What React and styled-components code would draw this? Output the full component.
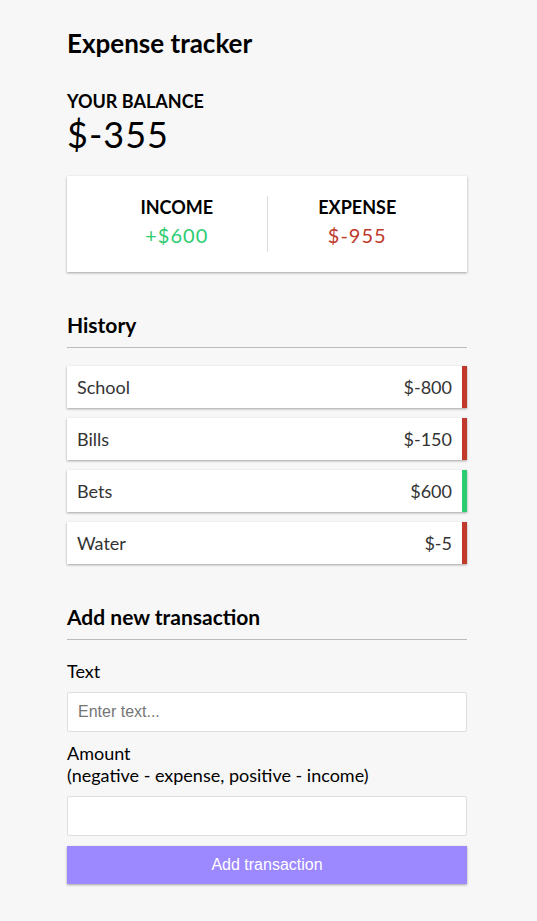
import React, { useState } from "react";
import styled, { createGlobalStyle } from "styled-components";

const shadow = "0 1px 3px rgba(0, 0, 0, 0.12), 0 1px 2px rgba(0, 0, 0, 0.24)";

const GlobalStyle = createGlobalStyle`
  * {
    box-sizing: border-box;
  }
  body {
    margin: 0;
    background-color: #f7f7f7;
    font-family: Lato, "Open Sans", sans-serif;
    font-size: 18px;
    color: #000;
  }
`;

const Container = styled.div`
  width: 400px;
  margin: 27px 0 30px 67px;
`;

const Title = styled.h2`
  font-size: 26px;
  font-weight: 700;
  margin: 0 0 30.6px;
`;

const Caps = styled.h4`
  font-size: 18px;
  margin: 0;
  text-transform: uppercase;
`;

const Balance = styled.h1`
  font-size: 36px;
  font-weight: 400;
  letter-spacing: 1px;
  margin: 0;
`;

const IncExp = styled.div`
  display: flex;
  justify-content: space-between;
  background-color: #fff;
  box-shadow: ${shadow};
  padding: 20px;
  margin: 20px 0;
`;

const IncExpCol = styled.div`
  flex: 1;
  text-align: center;
  border-right: ${(p) => (p.$divider ? "1px solid #dedede" : "none")};
`;

const Money = styled.p`
  font-size: 20px;
  letter-spacing: 1px;
  margin: 5px 0;
  color: ${(p) => (p.$plus ? "#2ecc71" : "#c0392b")};
`;

const Heading = styled.h3`
  font-size: 21px;
  border-bottom: 1px solid #bbb;
  padding-bottom: 10px;
  margin: 40px 0 10px;
`;

const List = styled.ul`
  list-style-type: none;
  padding: 0;
  margin: 18px 0 40px;
`;

const Item = styled.li`
  display: flex;
  justify-content: space-between;
  background-color: #fff;
  box-shadow: ${shadow};
  color: #333;
  padding: 10px;
  margin: 10px 0;
  border-right: 5px solid ${(p) => (p.$plus ? "#2ecc71" : "#c0392b")};
`;

const FormControl = styled.div``;

const Label = styled.label`
  display: inline-block;
  margin: 10px 0;
`;

const Input = styled.input`
  display: block;
  width: 100%;
  border: 1px solid #dedede;
  border-radius: 2px;
  font-family: Arial, "Liberation Sans", sans-serif;
  font-size: 16px;
  padding: 10px;
  background: #fff;
  outline: none;
`;

const Button = styled.button`
  display: block;
  width: 100%;
  cursor: pointer;
  background-color: #9c88ff;
  box-shadow: ${shadow};
  color: #fff;
  border: 0;
  font-family: Arial, "Liberation Sans", sans-serif;
  font-size: 16px;
  margin: 10px 0 30px;
  padding: 10px;
`;

const transactions = [
  { id: 1, text: "School", amount: -800 },
  { id: 2, text: "Bills", amount: -150 },
  { id: 3, text: "Bets", amount: 600 },
  { id: 4, text: "Water", amount: -5 },
];

export default function App() {
  const [text, setText] = useState("");
  const [amount, setAmount] = useState("");

  const income = transactions
    .filter((t) => t.amount > 0)
    .reduce((s, t) => s + t.amount, 0);
  const expense = transactions
    .filter((t) => t.amount < 0)
    .reduce((s, t) => s + t.amount, 0);

  return (
    <>
      <GlobalStyle />
      <Container>
        <Title>Expense tracker</Title>
        <Caps>Your Balance</Caps>
        <Balance>${income + expense}</Balance>

        <IncExp>
          <IncExpCol $divider>
            <Caps>Income</Caps>
            <Money $plus>+${income}</Money>
          </IncExpCol>
          <IncExpCol>
            <Caps>Expense</Caps>
            <Money>${expense}</Money>
          </IncExpCol>
        </IncExp>

        <Heading>History</Heading>
        <List>
          {transactions.map((t) => (
            <Item key={t.id} $plus={t.amount > 0}>
              {t.text}
              <span>${t.amount}</span>
            </Item>
          ))}
        </List>

        <Heading>Add new transaction</Heading>
        <form onSubmit={(e) => e.preventDefault()}>
          <FormControl>
            <Label htmlFor="text">Text</Label>
            <Input
              type="text"
              id="text"
              value={text}
              onChange={(e) => setText(e.target.value)}
              placeholder="Enter text..."
            />
          </FormControl>
          <FormControl>
            <Label htmlFor="amount">
              Amount <br />
              (negative - expense, positive - income)
            </Label>
            <Input
              type="number"
              id="amount"
              value={amount}
              onChange={(e) => setAmount(e.target.value)}
            />
          </FormControl>
          <Button>Add transaction</Button>
        </form>
      </Container>
    </>
  );
}
